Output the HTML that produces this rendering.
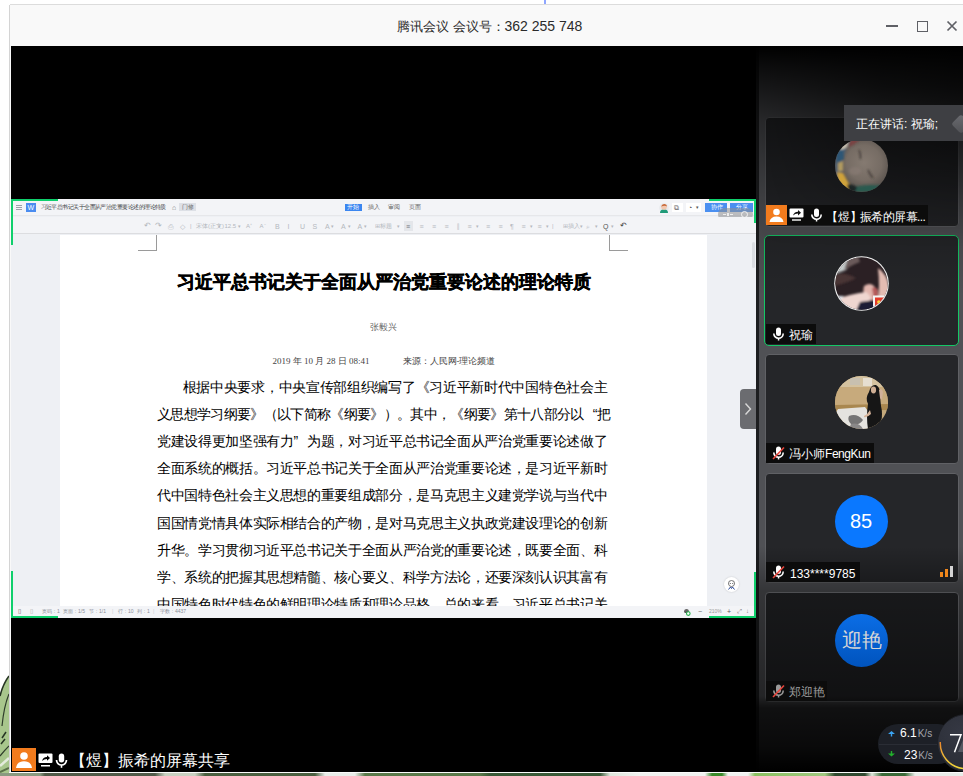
<!DOCTYPE html>
<html><head><meta charset="utf-8">
<style>
*{margin:0;padding:0;box-sizing:border-box}
html,body{width:963px;height:776px;overflow:hidden;background:#fff;font-family:"Liberation Sans",sans-serif;position:relative}
.a{position:absolute}
.t{position:absolute;white-space:nowrap;line-height:1}
.bl{height:14px;font-size:14px;line-height:14px;letter-spacing:-0.7px;color:#000;text-align:justify;text-align-last:justify;white-space:nowrap}
</style></head><body>
<!-- wallpaper -->
<svg class="a" style="left:0;top:660px" width="9" height="116" viewBox="0 0 9 116"><path d="M9 16 Q3 24 0 36 L0 116 L9 116Z" fill="#a8c68c"/><path d="M9 16 Q3 24 0 36" stroke="#263423" stroke-width="1.6" fill="none"/><path d="M9 34 Q4 46 2 66" stroke="#2e3c2a" stroke-width="1.2" fill="none"/><path d="M2 78 L6 72 M1 84 L5 79" stroke="#263423" stroke-width="1.5"/><path d="M0 96 Q5 90 9 86" stroke="#2e3c2a" stroke-width="1.2" fill="none"/><path d="M0 106 L9 98" stroke="#e4ecdc" stroke-width="2.5"/><path d="M0 112 L9 108" stroke="#5a7048" stroke-width="2"/></svg>
<div class="a" style="left:0;top:773px;width:963px;height:3px;background:linear-gradient(90deg,#8a9a80 0,#8a9a80 40px,#505a48 45px,#505a48 155px,#c8d0c0 165px,#c8d0c0 195px,#4a6040 205px,#4a6040 315px,#e8ece8 325px,#e8ece8 355px,#5a7a4a 365px,#5a7a4a 480px,#3a5a38 490px,#3a5a38 600px,#dde5da 610px,#f0f2f0 640px,#f0f2f0 705px,#3a8a2a 712px,#3a8a2a 722px,#f0f2f0 728px,#f0f2f0 748px,#8ac060 755px,#a0c880 825px,#304a30 835px,#304a30 865px,#e0e8dc 872px,#3a6a38 882px,#3a6a38 905px,#e8ece8 915px,#e8ece8 963px)"></div>
<!-- window border -->
<div class="a" style="left:544px;top:0;width:1.5px;height:4px;background:#8fa6ff"></div>
<div class="a" style="left:10px;top:4px;width:953px;height:1px;background:#dcdcdc"></div>
<div class="a" style="left:9px;top:5px;width:1px;height:768px;background:#d4d4d4"></div>
<!-- title bar -->
<div class="a" style="left:10px;top:5px;width:953px;height:41px;background:#f9f9f9"></div>
<div class="t" style="left:396.5px;top:19.5px;font-size:13px;color:#2b2b2b">腾讯会议</div>
<div class="t" style="left:452.5px;top:19.5px;font-size:13px;color:#2b2b2b">会议号</div>
<div class="t" style="left:491.5px;top:19.5px;font-size:13px;color:#2b2b2b">：</div>
<div class="t" style="left:504.5px;top:19px;font-size:14px;color:#2b2b2b">362 255 748</div>
<!-- window controls -->
<div class="a" style="left:886px;top:25px;width:12px;height:2px;background:#5f6066"></div>
<div class="a" style="left:917px;top:21px;width:10.5px;height:10.5px;border:1.8px solid #5f6066"></div>
<svg class="a" style="left:946px;top:20px" width="12" height="12" viewBox="0 0 12 12"><path d="M1.5 1.5L10.5 10.5M10.5 1.5L1.5 10.5" stroke="#5f6066" stroke-width="1.7"/></svg>
<!-- main black -->
<div class="a" style="left:10px;top:46px;width:1px;height:726px;background:#f9f9f9"></div>
<div class="a" style="left:11px;top:46px;width:745px;height:726px;background:#000"></div>

<!-- WPS screen share -->
<div class="a" id="wps" style="left:11px;top:199px;width:745px;height:419px;background:#eef0f4;overflow:hidden">
  <!-- title bar -->
  <div class="a" style="left:0;top:0;width:745px;height:17px;background:#f3f4f7;border-bottom:1px solid #e6e7ea"></div>
  <div class="a" style="left:5px;top:6px;width:6px;height:1px;background:#9ca1aa;box-shadow:0 2px 0 #9ca1aa,0 4px 0 #9ca1aa"></div>
  <div class="a" style="left:15px;top:4px;width:10px;height:9px;background:#4a8cf0"></div>
  <div class="t" style="left:16.5px;top:5px;font-size:7px;color:#fff">W</div>
  <div class="t" style="left:29.5px;top:5px;font-size:6px;letter-spacing:-0.55px;color:#3a3d42">习近平总书记关于全面从严治党重要论述的理论特质</div>
  <div class="t" style="left:161px;top:5px;font-size:7px;color:#888">⌂</div>
  <div class="a" style="left:168px;top:4px;width:17px;height:8px;background:#dde0e6"></div>
  <div class="t" style="left:171px;top:5px;font-size:6px;color:#666">门修</div>
  <div class="a" style="left:334px;top:5px;width:17px;height:7px;background:#3b86f0"></div>
  <div class="t" style="left:336px;top:5px;font-size:6px;color:#fff">开始</div>
  <div class="t" style="left:357px;top:5px;font-size:6px;color:#666">插入</div>
  <div class="t" style="left:377px;top:5px;font-size:6px;color:#666">审阅</div>
  <div class="t" style="left:398px;top:5px;font-size:6px;color:#666">页面</div>
  <svg class="a" style="left:648px;top:3.5px" width="10" height="10" viewBox="0 0 10 10"><circle cx="5" cy="5" r="4.8" fill="#e8eaee"/><path d="M1 10 Q1 6 5 6.5 Q9 6 9 10Z" fill="#1f9a78"/><circle cx="5" cy="4" r="2.8" fill="#f2c8b0"/><path d="M2.2 3.5 Q3 0.8 5.5 1 Q8 1.2 8 3.5 Q6 2.2 2.2 3.5Z" fill="#c86a3a"/></svg>
  <div class="a" style="left:661px;top:4px;width:11px;height:9px;background:#fff"></div>
  <div class="t" style="left:663px;top:4.5px;font-size:7px;color:#666">⧉</div>
  <div class="a" style="left:675px;top:4px;width:15px;height:9px;background:#fff"></div>
  <div class="t" style="left:677px;top:4.5px;font-size:7px;color:#555">◔</div>
  <div class="t" style="left:685px;top:6px;font-size:5px;color:#555">▾</div>
  <div class="a" style="left:694px;top:4px;width:22px;height:8.5px;background:#4a8ff0"></div>
  <div class="t" style="left:700px;top:5px;font-size:6px;color:#fff">协作</div>
  <div class="a" style="left:719px;top:4px;width:23px;height:8.5px;background:#4a8ff0"></div>
  <div class="t" style="left:725px;top:5px;font-size:6px;color:#fff">分享</div>
  <div class="a" style="left:706.5px;top:9px;width:35.5px;height:12.8px;border-radius:6.4px;background:rgba(140,142,146,.55)"></div>
  <div class="a" style="left:712px;top:14.5px;width:3px;height:1px;background:#eee"></div>
  <div class="a" style="left:716px;top:13.5px;width:2px;height:3px;background:#eee"></div>
  <div class="a" style="left:719px;top:14.5px;width:3px;height:1px;background:#eee"></div>
  <div class="a" style="left:729.5px;top:12px;width:7px;height:7px;border-radius:50%;border:1.2px solid #f4f4f4"></div>
  <!-- toolbar -->
  <div class="a" style="left:0;top:18px;width:745px;height:17px;background:#f3f4f7;border-bottom:1px solid #dcdde0"></div>
  <div class="a" style="left:392.5px;top:22.0px;width:9.5px;height:10px;background:#e4e6ea"></div>
  <div class="t" style="left:132.5px;top:23.0px;font-size:8px;color:#b4b8be">↶</div>
  <div class="t" style="left:144.0px;top:23.0px;font-size:8px;color:#b4b8be">↷</div>
  <div class="t" style="left:156.5px;top:23.5px;font-size:7px;color:#b4b8be">⎙</div>
  <div class="t" style="left:169.0px;top:23.5px;font-size:7px;color:#b4b8be">◇</div>
  <div class="t" style="left:179.0px;top:24.0px;font-size:6px;color:#b4b8be">|</div>
  <div class="t" style="left:185.0px;top:24.0px;font-size:6px;color:#b4b8be">宋体(正文)</div>
  <div class="t" style="left:206.5px;top:24.5px;font-size:5px;color:#b4b8be">▾</div>
  <div class="t" style="left:213.5px;top:24.0px;font-size:6px;color:#b4b8be">12.5</div>
  <div class="t" style="left:226.5px;top:24.5px;font-size:5px;color:#b4b8be">▾</div>
  <div class="t" style="left:235.0px;top:24.0px;font-size:6px;color:#b4b8be">A⁺</div>
  <div class="t" style="left:248.5px;top:24.0px;font-size:6px;color:#b4b8be">A⁻</div>
  <div class="t" style="left:264.0px;top:23.5px;font-size:7px;color:#b4b8be">B</div>
  <div class="t" style="left:276.5px;top:23.5px;font-size:7px;color:#b4b8be">I</div>
  <div class="t" style="left:289.0px;top:23.5px;font-size:7px;color:#b4b8be">U</div>
  <div class="t" style="left:301.5px;top:23.5px;font-size:7px;color:#b4b8be">S</div>
  <div class="t" style="left:314.0px;top:23.5px;font-size:7px;color:#b4b8be">A</div>
  <div class="t" style="left:320.0px;top:24.5px;font-size:5px;color:#b4b8be">▾</div>
  <div class="t" style="left:330.0px;top:23.5px;font-size:7px;color:#b4b8be">A</div>
  <div class="t" style="left:336.5px;top:24.5px;font-size:5px;color:#b4b8be">▾</div>
  <div class="t" style="left:346.5px;top:23.5px;font-size:7px;color:#b4b8be">A</div>
  <div class="t" style="left:352.5px;top:24.5px;font-size:5px;color:#b4b8be">▾</div>
  <div class="t" style="left:363.5px;top:24.0px;font-size:6px;color:#b4b8be">⊞标题</div>
  <div class="t" style="left:386.0px;top:24.5px;font-size:5px;color:#b4b8be">▾</div>
  <div class="t" style="left:408.5px;top:23.5px;font-size:7px;color:#b4b8be">≡</div>
  <div class="t" style="left:421.0px;top:23.5px;font-size:7px;color:#b4b8be">≡</div>
  <div class="t" style="left:433.5px;top:23.5px;font-size:7px;color:#b4b8be">≡</div>
  <div class="t" style="left:446.0px;top:23.5px;font-size:7px;color:#b4b8be">⫿</div>
  <div class="t" style="left:456.5px;top:23.5px;font-size:7px;color:#b4b8be">≡</div>
  <div class="t" style="left:464.5px;top:24.5px;font-size:5px;color:#b4b8be">▾</div>
  <div class="t" style="left:475.0px;top:23.5px;font-size:7px;color:#b4b8be">≡</div>
  <div class="t" style="left:487.5px;top:23.5px;font-size:7px;color:#b4b8be">≡</div>
  <div class="t" style="left:499.0px;top:23.5px;font-size:7px;color:#b4b8be">¶</div>
  <div class="t" style="left:510.5px;top:23.5px;font-size:7px;color:#b4b8be">≡</div>
  <div class="t" style="left:518.5px;top:24.5px;font-size:5px;color:#b4b8be">▾</div>
  <div class="t" style="left:526.5px;top:23.5px;font-size:7px;color:#b4b8be">≡</div>
  <div class="t" style="left:534.5px;top:24.5px;font-size:5px;color:#b4b8be">▾</div>
  <div class="t" style="left:541.0px;top:24.0px;font-size:6px;color:#b4b8be">|</div>
  <div class="t" style="left:551.5px;top:24.0px;font-size:6px;color:#b4b8be">⊞插入</div>
  <div class="t" style="left:569.0px;top:24.5px;font-size:5px;color:#b4b8be">▾</div>
  <div class="t" style="left:575.0px;top:23.5px;font-size:7px;color:#b4b8be">⌕</div>
  <div class="t" style="left:584.0px;top:24.5px;font-size:5px;color:#b4b8be">▾</div>
  <div class="t" style="left:592.0px;top:23.5px;font-size:7px;color:#555">Q</div>
  <div class="t" style="left:600.0px;top:24.5px;font-size:5px;color:#b4b8be">▾</div>
  <div class="t" style="left:608.5px;top:23.0px;font-size:8px;color:#444">↶</div>
  <div class="t" style="left:395.0px;top:23.5px;font-size:7px;color:#6e737a">≡</div>
  <!-- page -->
  <div class="a" id="page" style="left:48px;top:36px;width:648px;height:371px;background:#fff;overflow:hidden;box-shadow:inset 1px 0 0 #eef0f4">
<div class="a" style="left:79px;top:15px;width:19px;height:1px;background:#9a9a9a"></div>
<div class="a" style="left:97px;top:0;width:1px;height:15px;background:#9a9a9a"></div>
<div class="a" style="left:550px;top:15px;width:19px;height:1px;background:#9a9a9a"></div>
<div class="a" style="left:550px;top:0;width:1px;height:15px;background:#9a9a9a"></div>
<div class="t" style="left:118px;top:38px;font-size:18px;font-weight:bold;color:#000;-webkit-text-stroke:0.45px #000">习近平总书记关于全面从严治党重要论述的理论特质</div>
<div class="t" style="left:310.5px;top:87.5px;font-size:9px;color:#666;font-family:'Liberation Serif',serif">张毅兴</div>
<div class="t" style="left:213.5px;top:122px;font-size:9px;color:#444;font-family:'Liberation Serif',serif">2019 年 10 月 28 日 08:41</div>
<div class="t" style="left:343.5px;top:122px;font-size:9px;color:#444;font-family:'Liberation Serif',serif">来源：人民网-理论频道</div>
<div class="a bl" style="left:123.6px;top:145.0px;width:424.4px">根据中央要求，中央宣传部组织编写了《习近平新时代中国特色社会主</div>
<div class="a bl" style="left:98px;top:172.1px;width:453px">义思想学习纲要》（以下简称《纲要》）。其中，《纲要》第十八部分以<span style="display:inline-block;width:13px;text-align:right;text-align-last:right">“</span>把</div>
<div class="a bl" style="left:98px;top:199.2px;width:450px">党建设得更加坚强有力<span style="display:inline-block;width:13px;text-align:left;text-align-last:left">”</span>为题，对习近平总书记全面从严治党重要论述做了</div>
<div class="a bl" style="left:98px;top:226.3px;width:450px">全面系统的概括。习近平总书记关于全面从严治党重要论述，是习近平新时</div>
<div class="a bl" style="left:98px;top:253.4px;width:450px">代中国特色社会主义思想的重要组成部分，是马克思主义建党学说与当代中</div>
<div class="a bl" style="left:98px;top:280.5px;width:450px">国国情党情具体实际相结合的产物，是对马克思主义执政党建设理论的创新</div>
<div class="a bl" style="left:98px;top:307.6px;width:450px">升华。学习贯彻习近平总书记关于全面从严治党的重要论述，既要全面、科</div>
<div class="a bl" style="left:98px;top:334.7px;width:450px">学、系统的把握其思想精髓、核心要义、科学方法论，还要深刻认识其富有</div>
<div class="a bl" style="left:98px;top:361.8px;width:450px">中国特色时代特色的鲜明理论特质和理论品格。总的来看，习近平总书记关</div>
</div>
  <!-- scrollbar -->
  <div class="a" style="left:741px;top:43px;width:3px;height:26px;background:#dadde2;border-radius:2px"></div>
  <!-- status bar -->
  <div class="a" style="left:0;top:407px;width:745px;height:12px;background:#f3f4f7"></div>
  <div class="t" style="left:7px;top:409.3px;font-size:6px;color:#555">▯</div>
  <div class="t" style="left:19px;top:409.3px;font-size:6px;color:#aaa">▯</div>
  <div class="t" style="left:31px;top:409.8px;font-size:5px;color:#8a8f99">页码：1</div>
  <div class="t" style="left:52px;top:409.8px;font-size:5px;color:#8a8f99">页面：1/5</div>
  <div class="t" style="left:78px;top:409.8px;font-size:5px;color:#8a8f99">节：1/1</div>
  <div class="t" style="left:101px;top:409.8px;font-size:5px;color:#c8cad0">|</div>
  <div class="t" style="left:107px;top:409.8px;font-size:5px;color:#8a8f99">行：10</div>
  <div class="t" style="left:126px;top:409.8px;font-size:5px;color:#8a8f99">列：1</div>
  <div class="t" style="left:142px;top:409.8px;font-size:5px;color:#c8cad0">|</div>
  <div class="t" style="left:149px;top:409.8px;font-size:5px;color:#8a8f99">字数：4437</div>
  <svg class="a" style="left:672px;top:408.5px" width="8" height="8" viewBox="0 0 8 8"><path d="M1 4 Q1 1 3.5 1 Q6 1 6 4Z" fill="#666"/><rect x="1.5" y="3.5" width="4" height="1.5" fill="#555"/><circle cx="5.3" cy="5.6" r="1.8" stroke="#22b04a" stroke-width="1.1" fill="#fff"/></svg>
  <div class="t" style="left:687px;top:408.8px;font-size:7px;color:#666">−</div>
  <div class="t" style="left:698px;top:409.8px;font-size:5px;color:#999">210%</div>
  <div class="t" style="left:716px;top:408.8px;font-size:7px;color:#555">+</div>
  <div class="t" style="left:726px;top:409.3px;font-size:6px;color:#777">⤢</div>
  <div class="t" style="left:735px;top:409.3px;font-size:6px;color:#777">↓</div>
  <!-- green brackets -->
  <div class="a" style="left:0;top:0;width:47px;height:2px;background:#0fcf6c"></div>
  <div class="a" style="left:0;top:0;width:2px;height:46px;background:#0fcf6c"></div>
  <div class="a" style="left:698px;top:0;width:47px;height:2px;background:#0fcf6c"></div>
  <div class="a" style="left:743px;top:0;width:2px;height:24px;background:#0fcf6c"></div>
  <div class="a" style="left:0;top:417px;width:47px;height:2px;background:#0fcf6c"></div>
  <div class="a" style="left:0;top:372px;width:2px;height:47px;background:#0fcf6c"></div>
  <div class="a" style="left:698px;top:417px;width:47px;height:2px;background:#0fcf6c"></div>
  <div class="a" style="left:743px;top:372.5px;width:2px;height:46.5px;background:#0fcf6c"></div>
</div>

<!-- bottom label -->
<div class="a" style="left:12px;top:748px;width:24px;height:23px;background:#f27b1d"><svg class="a" style="left:0;top:0" width="24" height="23" viewBox="0 0 24 23"><circle cx="12" cy="8" r="3.8" fill="#fff"/><path d="M4 20 Q5 13.2 12 13.2 Q19 13.2 20 20Z" fill="#fff"/></svg></div>
<svg class="a" style="left:38px;top:753px" width="15" height="14" viewBox="0 0 15 14"><rect x="0.5" y="0.5" width="14" height="9.5" rx="1" fill="#fff"/><path d="M4 8 Q5 4.2 9 4 L9 2.2 L12 5 L9 7.8 L9 5.9 Q6 5.9 4 8Z" fill="#000"/><rect x="3" y="12" width="9" height="1.5" fill="#fff"/></svg>
<svg class="a" style="left:55px;top:752.5px" width="13" height="15" viewBox="0 0 13 15"><rect x="3.8" y="0.5" width="5.4" height="9" rx="2.7" fill="#fff"/><path d="M1.5 7 A5 5 0 0 0 11.5 7" stroke="#fff" stroke-width="1.7" fill="none"/><rect x="5.7" y="12" width="1.6" height="2.8" fill="#fff"/></svg>
<div class="t" style="left:69.5px;top:753px;font-size:16px;color:#fff">【煜】振希的屏幕共享</div>
<!-- arrow button -->
<div class="a" style="left:740px;top:389px;width:16px;height:40px;background:#6b6c70;border-radius:4px 0 0 4px"></div>
<svg class="a" style="left:744px;top:402px" width="8" height="14" viewBox="0 0 8 14"><path d="M1.5 1.5 L6.5 7 L1.5 12.5" stroke="#d8d8d8" stroke-width="1.4" fill="none"/></svg>
<!-- assistant icon -->
<div class="a" style="left:724px;top:577px;width:15px;height:15px;border-radius:50%;background:#fff;box-shadow:0 0 2px rgba(0,0,0,.18)"></div>
<svg class="a" style="left:724px;top:577px" width="15" height="15" viewBox="0 0 15 15"><path d="M4.5 7 Q4 3.5 7.5 3.5 Q11 3.5 10.5 7 Q10 9.5 7.5 9.5 Q5 9.5 4.5 7Z" stroke="#555" stroke-width=".8" fill="none"/><path d="M4.5 12.5 L6.5 10 L7.5 11.5 L8.5 10 L10.5 12.5" stroke="#2a4a9a" stroke-width="1" fill="none"/><circle cx="6.3" cy="6.5" r=".5" fill="#444"/><circle cx="8.7" cy="6.5" r=".5" fill="#444"/></svg>
<!-- right panel -->
<div class="a" style="left:756px;top:46px;width:207px;height:726px;background:#505155;overflow:hidden">
  <div class="a" style="left:0;top:0;width:3px;height:726px;background:#1d1e20"></div>
  <!-- cards -->
  <div class="a" style="left:8.5px;top:70.5px;width:194.5px;height:110px;border:1.5px solid #5e5f63;border-radius:4px;background:#252629"></div>
  <div class="a" style="left:8px;top:189.3px;width:195px;height:110.7px;border:1.7px solid #14c866;border-radius:5px;background:#252629"></div>
  <div class="a" style="left:8.5px;top:308px;width:194.5px;height:110px;border:1.5px solid #606165;border-radius:4px;background:#252629"></div>
  <div class="a" style="left:8.5px;top:427px;width:194.5px;height:110px;border:1.5px solid #606165;border-radius:4px;background:#252629"></div>
  <div class="a" style="left:8.5px;top:546px;width:194.5px;height:110px;border:1.5px solid #78797e;border-radius:4px;background:#252629"></div>
  <!-- vignette -->
  <div class="a" style="left:0;top:0;width:207px;height:200px;background:linear-gradient(90deg,rgba(0,0,0,0) 0,rgba(0,0,0,.45) 60%,rgba(0,0,0,.6) 100%);-webkit-mask-image:linear-gradient(180deg,#000 0,#000 40px,transparent 200px);mask-image:linear-gradient(180deg,#000 0,#000 40px,transparent 200px)"></div>
  <div class="a" style="left:0;top:0;width:207px;height:726px;background:linear-gradient(180deg,#000 0px,rgba(0,0,0,.85) 20px,rgba(0,0,0,.5) 75px,rgba(0,0,0,.2) 160px,rgba(0,0,0,0) 250px,rgba(0,0,0,0) 500px,rgba(0,0,0,.35) 545px,rgba(0,0,0,.45) 600px,rgba(0,0,0,.55) 650px,rgba(0,0,0,.8) 662px,rgba(0,0,0,.88) 700px,#000 726px)"></div>
</div>
<!-- avatars -->
<svg class="a" style="left:835px;top:139px" width="53" height="53" viewBox="0 0 53 53">
  <defs><clipPath id="c1"><circle cx="26.5" cy="26.5" r="26.5"/></clipPath><filter id="bl1" x="-10%" y="-10%" width="120%" height="120%"><feGaussianBlur stdDeviation="1.1"/></filter><radialGradient id="f1" cx="0.55" cy="0.45" r="0.6"><stop offset="0" stop-color="#857a71"/><stop offset="0.55" stop-color="#766c64"/><stop offset="1" stop-color="#4e4844"/></radialGradient></defs>
  <g clip-path="url(#c1)">
    <rect width="53" height="53" fill="url(#f1)"/>
    <g filter="url(#bl1)">
    <path d="M0 0 L16 0 L12 8 L8 20 L7 34 L10 44 L16 53 L0 53Z" fill="#4b5d6e"/>
    <path d="M4 4 L14 0 L12 8 L6 12Z" fill="#c8c0b0"/>
    <path d="M1 14 L8 10 L9 20 L2 24Z" fill="#2d5674"/>
    <path d="M2 33 L8 34 L14 45 L18 53 L8 53 L3 44Z" fill="#cfa23a"/>
    <path d="M3 24 L8 22 L8 32 L3 32Z" fill="#b09a60"/>
    <path d="M16 0 L26 0 L18 6 L13 8Z" fill="#7a4242"/>
    <path d="M16 49 Q30 44 50 47 L53 53 L14 53Z" fill="#2a5a50"/>
    <path d="M12 46 Q16 44 22 48 L20 53 L14 53Z" fill="#1e2626"/>
    <path d="M24 11 Q26 15 25.5 20" stroke="#3a3430" stroke-width="1.3" fill="none"/>
    <path d="M33 31 Q35 36 38 39" stroke="#3a3430" stroke-width="1.3" fill="none"/>
    <ellipse cx="20" cy="32" rx="6" ry="4" fill="#8e7f78" opacity=".5"/>
    </g>
  </g>
</svg>
<svg class="a" style="left:834px;top:256px" width="55" height="55" viewBox="0 0 55 55">
  <defs><clipPath id="c2"><circle cx="27.5" cy="27.5" r="26.2"/></clipPath><filter id="bl2" x="-10%" y="-10%" width="120%" height="120%"><feGaussianBlur stdDeviation="0.9"/></filter></defs>
  <circle cx="27.5" cy="27.5" r="27.3" fill="#f2f2f2"/>
  <g clip-path="url(#c2)">
    <rect width="55" height="55" fill="#2b2024"/>
    <g filter="url(#bl2)">
    <path d="M0 0 L24 0 L18 6 L12 14 L0 18Z" fill="#c5cccc"/>
    <path d="M10 14 Q20 8 26 6 L24 0 L14 2Z" fill="#6a5a5a"/>
    <path d="M0 18 Q12 16 22 22 Q16 26 0 30Z" fill="#4a3434"/>
    <path d="M44 12 Q53 18 55 30 L55 44 L44 42 Q46 30 44 12Z" fill="#e3bcb2"/>
    <path d="M30 30 Q36 26 40 30 Q44 36 42 44 L32 44 Q28 38 30 30Z" fill="#e2b6ae"/>
    <path d="M38 32 Q42 30 44 34 L44 44 L40 44Z" fill="#b45a5a"/>
    <path d="M0 44 Q16 38 32 36 Q38 40 36 46 L28 55 L0 55Z" fill="#efd6d0"/>
    <path d="M0 40 L10 40 L4 46 L0 46Z" fill="#dfe6ee"/>
    <path d="M26 46 L40 44 L42 55 L22 55Z" fill="#1e1e36"/>
    </g>
    <rect x="39" y="39.5" width="16" height="16" fill="#f4f4f4"/>
    <rect x="41" y="41.5" width="14" height="14" fill="#e23b2a"/>
    <circle cx="44.8" cy="46" r="1.7" fill="#f7d43a"/>
  </g>
</svg>
<svg class="a" style="left:835px;top:375.5px" width="53" height="53" viewBox="0 0 53 53">
  <defs><clipPath id="c3"><circle cx="26.5" cy="26.5" r="26.5"/></clipPath><filter id="bl3" x="-10%" y="-10%" width="120%" height="120%"><feGaussianBlur stdDeviation="0.7"/></filter></defs>
  <g clip-path="url(#c3)">
    <rect width="53" height="53" fill="#c5a97c"/>
    <g filter="url(#bl3)">
    <rect x="0" y="0" width="53" height="11" fill="#d4c2a0"/>
    <rect x="15" y="2" width="10" height="7" fill="#c8c0b0"/>
    <rect x="28" y="2" width="9" height="8" fill="#e6ded0"/>
    <path d="M0 11 L53 11 L53 30 L0 30Z" fill="#c7aa7c"/>
    <path d="M0 29 L53 28 L53 34 L0 35Z" fill="#a9874f"/>
    <path d="M3 33 L30 31 L46 53 L0 53 L0 38Z" fill="#e5e3df"/>
    <path d="M14 40 Q22 37 28 44 Q24 50 16 48 Q12 44 14 40Z" fill="#767474"/>
    <path d="M16 48 Q24 46 28 53 L14 53Z" fill="#8a8888"/>
    <path d="M34 16 Q36 8 41 9 Q46 12 45 20 L46 30 Q48 38 46 46 L42 53 L33 53 Q31 40 33 28 Q30 22 34 16Z" fill="#141414"/>
    <ellipse cx="38.5" cy="14" rx="2.6" ry="3.4" fill="#cfae94"/>
    <path d="M29 40 Q33 38 35 34 L36 38 Q32 42 29 41Z" fill="#d6b49a"/>
    <path d="M44 14 Q47 12 48 16 L47 24 L45 22Z" fill="#d0b09a"/>
    </g>
  </g>
</svg>
<div class="a" style="left:835px;top:494.5px;width:53px;height:53px;border-radius:50%;background:#0a78ff"></div>
<div class="t" style="left:850px;top:511px;font-size:20px;color:#fff">85</div>
<div class="a" style="left:835px;top:613.5px;width:53px;height:53px;border-radius:50%;background:linear-gradient(180deg,#0b6ee6,#0053bd)"></div>
<div class="t" style="left:842px;top:630px;font-size:20px;color:#d6d6d6">迎艳</div>
<!-- label bars -->
<div class="a" style="left:766px;top:205px;width:162px;height:20px;background:#0c0c0c"></div>
<div class="a" style="left:766px;top:205px;width:21px;height:20px;background:#f27b1d"><svg class="a" style="left:0;top:0" width="21" height="20" viewBox="0 0 21 20"><circle cx="10.5" cy="7" r="3.3" fill="#fff"/><path d="M3.5 17 Q4.5 11.5 10.5 11.5 Q16.5 11.5 17.5 17Z" fill="#fff"/></svg></div>
<svg class="a" style="left:789px;top:208px" width="15" height="13" viewBox="0 0 15 13"><rect x="0.5" y="0.5" width="14" height="9" rx="1" fill="#fff"/><path d="M4 7.5 Q5 4 9 3.8 L9 2 L12 4.8 L9 7.5 L9 5.6 Q6 5.6 4 7.5Z" fill="#111"/><rect x="3" y="11.3" width="9" height="1.4" fill="#fff"/></svg>
<svg class="a" style="left:810px;top:207.5px" width="13" height="14" viewBox="0 0 13 14"><rect x="4" y="0.5" width="5" height="8.5" rx="2.5" fill="#fff"/><path d="M1.8 6.5 A4.7 4.7 0 0 0 11.2 6.5" stroke="#fff" stroke-width="1.6" fill="none"/><rect x="5.8" y="11" width="1.5" height="2.5" fill="#fff"/></svg>
<div class="t" style="left:826px;top:211px;font-size:12px;color:#fff">【煜】</div>
<div class="t" style="left:860px;top:211px;font-size:12px;letter-spacing:-0.6px;color:#fff">振希的屏幕...</div>
<div class="a" style="left:766px;top:324px;width:50px;height:20px;background:#0c0c0c"></div>
<svg class="a" style="left:772px;top:327px" width="13" height="14" viewBox="0 0 13 14"><rect x="4" y="0.5" width="5" height="8.5" rx="2.5" fill="#fff"/><path d="M1.8 6.5 A4.7 4.7 0 0 0 11.2 6.5" stroke="#fff" stroke-width="1.6" fill="none"/><rect x="5.8" y="11" width="1.5" height="2.5" fill="#fff"/></svg>
<div class="t" style="left:789px;top:329px;font-size:12px;color:#fff">祝瑜</div>
<div class="a" style="left:766px;top:443px;width:108px;height:20px;background:#0c0c0c"></div>
<svg class="a" style="left:772px;top:446px" width="13" height="14" viewBox="0 0 13 14"><rect x="4" y="0.5" width="5" height="8.5" rx="2.5" fill="#fff"/><path d="M1.8 6.5 A4.7 4.7 0 0 0 11.2 6.5" stroke="#fff" stroke-width="1.6" fill="none"/><rect x="5.8" y="11" width="1.5" height="2.5" fill="#fff"/><path d="M1 13 L12 1.5" stroke="#e8453c" stroke-width="1.6"/></svg>
<div class="t" style="left:789px;top:448px;font-size:12px;color:#fff">冯小师<span style="letter-spacing:-0.45px">FengKun</span></div>
<div class="a" style="left:766px;top:562px;width:94px;height:20px;background:#0c0c0c"></div>
<svg class="a" style="left:772px;top:565px" width="13" height="14" viewBox="0 0 13 14"><rect x="4" y="0.5" width="5" height="8.5" rx="2.5" fill="#fff"/><path d="M1.8 6.5 A4.7 4.7 0 0 0 11.2 6.5" stroke="#fff" stroke-width="1.6" fill="none"/><rect x="5.8" y="11" width="1.5" height="2.5" fill="#fff"/><path d="M1 13 L12 1.5" stroke="#e8453c" stroke-width="1.6"/></svg>
<div class="t" style="left:790px;top:567.5px;font-size:12px;color:#fff">133****9785</div>
<div class="a" style="left:940px;top:572px;width:3px;height:5px;background:#f0861b"></div>
<div class="a" style="left:945px;top:569px;width:3px;height:8px;background:#f0861b"></div>
<div class="a" style="left:950px;top:566px;width:3px;height:11px;background:#d4d4d4"></div>
<div class="a" style="left:766px;top:681px;width:61px;height:20px;background:#0c0c0c"></div>
<svg class="a" style="left:772px;top:684px" width="13" height="14" viewBox="0 0 13 14"><rect x="4" y="0.5" width="5" height="8.5" rx="2.5" fill="#9a9a9a"/><path d="M1.8 6.5 A4.7 4.7 0 0 0 11.2 6.5" stroke="#9a9a9a" stroke-width="1.6" fill="none"/><rect x="5.8" y="11" width="1.5" height="2.5" fill="#9a9a9a"/><path d="M1 13 L12 1.5" stroke="#e8453c" stroke-width="1.6"/></svg>
<div class="t" style="left:789px;top:686px;font-size:12px;color:#9c9c9c">郑迎艳</div>
<!-- tooltip -->
<div class="a" style="left:844px;top:105px;width:119px;height:36px;background:#3e3f43"></div>
<div class="t" style="left:856px;top:118px;font-size:12px;color:#fff">正在讲话: 祝瑜;</div>
<div class="a" style="left:954px;top:117px;width:14px;height:14px;transform:rotate(45deg);border-radius:3px;background:linear-gradient(135deg,#6a6b70,#505155)"></div>
<!-- net stats -->
<div class="a" style="left:878px;top:724px;width:80px;height:40px;border-radius:20px;background:#1d2027"></div>
<div class="a" style="left:879px;top:744px;width:66px;height:1px;background:#2a2d35"></div>
<svg class="a" style="left:888px;top:731px" width="7" height="5.5" viewBox="0 0 7 5.5"><path d="M3.5 0 L7 3 L4.2 3 L4.2 5.5 L2.8 5.5 L2.8 3 L0 3Z" fill="#3ba4f2"/></svg>
<svg class="a" style="left:888px;top:751.2px" width="7" height="5.5" viewBox="0 0 7 5.5"><path d="M3.5 5.5 L7 2.5 L4.2 2.5 L4.2 0 L2.8 0 L2.8 2.5 L0 2.5Z" fill="#22b02c"/></svg>
<div class="t" style="left:900px;top:727px;font-size:12px;color:#fff">6.1<span style="font-size:10px;color:#a4a6ac;margin-left:1px">K/s</span></div>
<div class="t" style="left:904px;top:749px;font-size:12px;color:#fff">23<span style="font-size:10px;color:#a4a6ac;margin-left:1px">K/s</span></div>
<div class="a" style="left:936.5px;top:714px;width:58px;height:58px;border-radius:50%;background:radial-gradient(circle at 40% 30%,#353843,#2b2e37 70%);border:1.5px solid #1e2026"></div>
<svg class="a" style="left:937px;top:714px" width="26" height="58" viewBox="0 0 26 58"><defs><linearGradient id="g1" x1="0" y1="0" x2="0" y2="1"><stop offset="0" stop-color="#e8842c"/><stop offset=".5" stop-color="#f0b636"/><stop offset="1" stop-color="#f2d83a"/></linearGradient></defs><path d="M3.3 28 A25.5 25.5 0 0 0 26 54.5" stroke="url(#g1)" stroke-width="1.5" fill="none"/></svg>
<svg class="a" style="left:945px;top:730px" width="18" height="26" viewBox="0 0 18 26"><path d="M13 22 L18 10 L18 22Z" fill="#555862"/><path d="M5 4.8 H16 L9.5 22.2" stroke="#fff" stroke-width="1.5" fill="none"/></svg>
<div class="a" style="left:9px;top:772px;width:954px;height:1px;background:#fafafa"></div>
</body></html>
